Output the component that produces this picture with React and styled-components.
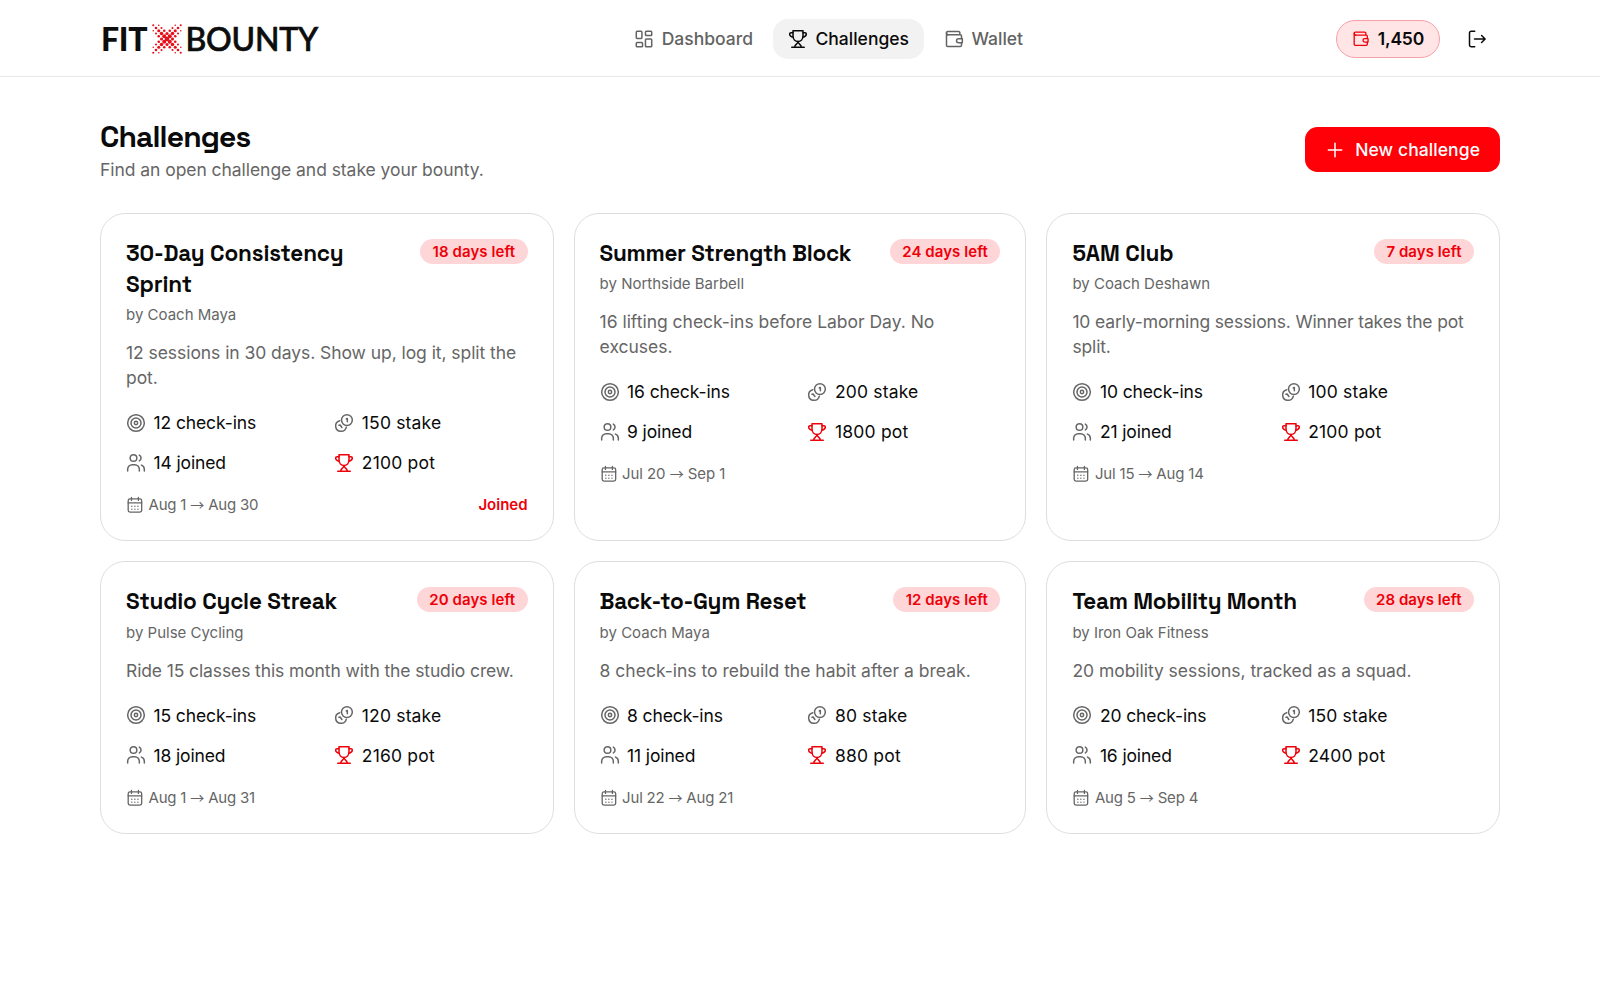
import React from "react";
import styled, { createGlobalStyle } from "styled-components";

const sans = `Inter, "Liberation Sans", sans-serif`;
const display = `"Space Grotesk", Inter, "Liberation Sans", sans-serif`;

const GlobalStyle = createGlobalStyle`
  *, *::before, *::after { box-sizing: border-box; }
  body { margin: 0; background: #fff; color: #0a0a0a; font-family: ${sans}; font-size: 17.5px; line-height: 25px; }
  h1, h2, p { margin: 0; }
  button { font: inherit; border: 0; background: none; padding: 0; color: inherit; }
`;

const Header = styled.header`
  height: 77px;
  border-bottom: 1px solid #e8e8e8;
  padding: 1px 100px 0;
  display: flex;
  justify-content: space-between;
  align-items: center;
`;
const Logo = styled.div`
  display: flex;
  align-items: center;
  width: 221px;
  height: 40px;
  padding-left: 1px;
  font-family: Lato, sans-serif;
  font-size: 32px;
  line-height: 40px;
  color: #0d0d0d;
`;
const LogoWord = styled.span`
  font-weight: ${(p) => (p.$heavy ? 900 : 500)};
  -webkit-text-stroke: ${(p) => (p.$heavy ? 0 : 0.7)}px #0d0d0d;
  letter-spacing: ${(p) => (p.$heavy ? -0.3 : -0.2)}px;
  width: ${(p) => (p.$heavy ? 50.5 : 135)}px;
  padding-left: ${(p) => (p.$heavy ? 0 : 4)}px;
  white-space: nowrap;
`;
const Nav = styled.nav`
  display: flex;
  gap: 5px;
`;
const NavItem = styled.a`
  display: flex;
  align-items: center;
  gap: 7.5px;
  height: 40px;
  padding: 0 15px;
  border-radius: 15px;
  font-weight: 500;
  color: ${(p) => (p.$active ? "#0a0a0a" : "#636363")};
  background: ${(p) => (p.$active ? "#f2f2f2" : "transparent")};
`;
const Account = styled.div`
  display: flex;
  justify-content: flex-end;
  align-items: center;
  gap: 15px;
`;
const Balance = styled.div`
  display: flex;
  align-items: center;
  gap: 8px;
  height: 38px;
  padding: 0 15px;
  border: 1px solid #f7a1a6;
  border-radius: 19px;
  background: #ffe5e6;
  font-weight: 600;
  letter-spacing: -0.2px;
`;
const IconButton = styled.button`
  width: 45px;
  height: 45px;
  display: grid;
  place-items: center;
`;
const Svg = styled.svg`
  display: block;
  flex: none;
  width: ${(p) => p.$size}px;
  height: ${(p) => p.$size}px;
  color: ${(p) => p.$color || "currentColor"};
`;

const Main = styled.main`
  padding: 40px 100px 0;
`;
const PageHead = styled.div`
  display: flex;
  align-items: center;
  justify-content: space-between;
  margin-bottom: 30.6px;
`;
const PageTitle = styled.h1`
  font-family: ${display};
  font-size: 30px;
  font-weight: 700;
  line-height: 40px;
  letter-spacing: -0.88px;
`;
const Muted = styled.p`
  color: #666;
  letter-spacing: ${(p) => p.$spacing || 0}px;
`;
const PrimaryButton = styled.button`
  display: flex;
  align-items: center;
  gap: 10px;
  height: 45px;
  padding: 0 20px;
  border-radius: 12.5px;
  background: #ff0008;
  color: #fff;
  font-weight: 500;
  letter-spacing: 0.08px;
`;
const Grid = styled.div`
  display: grid;
  grid-template-columns: 453.6fr 452.8fr 453.6fr;
  gap: 20px;
`;
const Card = styled.article`
  border: 1px solid #dedede;
  border-radius: 25px;
  padding: 25px;
`;
const CardHead = styled.div`
  display: flex;
  justify-content: space-between;
  align-items: flex-start;
  gap: 15px;
`;
const CardTitle = styled.h2`
  font-family: ${display};
  font-size: 22.5px;
  font-weight: 700;
  line-height: 30.94px;
  letter-spacing: ${(p) => p.$spacing}px;
`;
const Host = styled.p`
  margin-top: 4.7px;
  font-size: 15px;
  line-height: 20px;
  color: #666;
`;
const Badge = styled.span`
  flex: none;
  height: 25px;
  padding: 0 12.5px;
  border-radius: 12.5px;
  background: #ffd6d8;
  color: #ee0009;
  font-size: 15px;
  font-weight: 600;
  line-height: 25px;
  letter-spacing: 0.07px;
`;
const Description = styled(Muted)`
  margin-top: 15px;
`;
const Stats = styled.div`
  display: grid;
  grid-template-columns: 1fr 1fr;
  gap: 15px;
  margin-top: 20px;
`;
const Stat = styled.div`
  display: flex;
  align-items: center;
  gap: 7.5px;
  letter-spacing: ${(p) => p.$spacing}px;
`;
const CardFoot = styled.div`
  display: flex;
  justify-content: space-between;
  margin-top: 20px;
  font-size: 15px;
  line-height: 20px;
  color: #666;
`;
const Dates = styled.span`
  display: flex;
  align-items: center;
  gap: 5px;
  letter-spacing: ${(p) => p.$spacing}px;
`;
const Arrow = styled.span`
  font-family: "Noto Sans CJK JP", sans-serif;
  font-size: 14px;
  line-height: 1;
`;
const Joined = styled.span`
  color: #ee0009;
  font-weight: 600;
`;

function Icon({ size = 20, color, children }) {
  return (
    <Svg $size={size} $color={color} viewBox="0 0 24 24" fill="none" stroke="currentColor"
      strokeWidth="1.8" strokeLinecap="round" strokeLinejoin="round">
      {children}
    </Svg>
  );
}
const DashboardIcon = () => (
  <Icon>
    <rect x="2.75" y="2.75" width="6.75" height="8.5" rx="1" />
    <rect x="13.75" y="2.75" width="7.5" height="5" rx="1" />
    <rect x="2.75" y="16.25" width="7.5" height="5" rx="1" />
    <rect x="13.75" y="12" width="7.5" height="9.25" rx="1" />
  </Icon>
);
const TrophyIcon = (props) => (
  <Icon {...props}>
    <path d="M6 2h12v6.5c0 3.8-2.6 6.5-6 6.5s-6-2.7-6-6.5z" />
    <path d="M6 4.5H3.6C2.7 4.5 2 5.200 2 6.100c0 1.900 1.700 3.400 4.400 3.900" />
    <path d="M18 4.500h2.400c.9 0 1.600.7 1.600 1.600 0 1.900-1.700 3.400-4.400 3.900" />
    <path d="M12 15c0 3.200-4 3.200-4 7M12 15c0 3.200 4 3.200 4 7M4.500 22h15" />
  </Icon>
);
const WalletIcon = (props) => (
  <Icon {...props}>
    <path d="M21 11.500V8.500a1.500 1.500 0 0 0-1.500-1.500H4.500M19 7V4.500A1.500 1.500 0 0 0 17.500 3H4.500A1.500 1.500 0 0 0 3 4.500v15A1.500 1.500 0 0 0 4.500 21h15a1.500 1.500 0 0 0 1.500-1.500v-2.750" />
    <path d="M3 4.500C3 6 3.500 7 5 7" />
    <path d="M22 11.700h-4.500a2.300 2.300 0 0 0 0 4.900H22z" />
  </Icon>
);
const LogoutIcon = () => (
  <Icon>
    <path d="M9.250 2.750H5a2 2 0 0 0-2 2v14.500a2 2 0 0 0 2 2h4.250" />
    <path d="M9 12H21.500M17.500 7.750 21.750 12l-4.250 4.250" />
  </Icon>
);
const PlusIcon = () => (
  <Icon>
    <path d="M12 4v16M4 12h16" />
  </Icon>
);
const TargetIcon = (props) => (
  <Icon {...props}>
    <circle cx="12" cy="12" r="10" />
    <circle cx="12" cy="12" r="6" />
    <circle cx="12" cy="12" r="2" />
  </Icon>
);
const CoinsIcon = (props) => (
  <Icon {...props}>
    <circle cx="15.500" cy="8.500" r="6.500" />
    <path d="M6.900 9.200A6.500 6.500 0 1 0 14.800 17" />
    <path d="M14.700 7.200l1.300-.7v4M6 14.700l1.300-.3 2.200 3" />
  </Icon>
);
const UsersIcon = (props) => (
  <Icon {...props}>
    <circle cx="9" cy="6" r="4" />
    <path d="M16 2.500a4 4 0 0 1 0 7" />
    <path d="M2 21.500v-2A5.500 5.500 0 0 1 7.500 14h3a5.500 5.500 0 0 1 5.500 5.500v2" />
    <path d="M18.500 14.500c2.100.8 3.500 2.700 3.500 5v2" />
  </Icon>
);
const CalendarIcon = (props) => (
  <Icon {...props}>
    <rect x="3" y="4" width="18.500" height="18" rx="2.500" />
    <path d="M7.500 2v4M17 2v4M3 9.500h18.500" />
    <path d="M8 14h.01M12.200 14h.01M16.400 14h.01M8 18h.01M12.200 18h.01M16.400 18h.01" strokeWidth="2" />
  </Icon>
);

const dots = [];
for (let i = -5; i <= 5; i++) {
  for (let j = -5; j <= 5; j++) {
    const off = Math.abs(Math.abs(i) - Math.abs(j));
    if ((i + j) % 2 !== 0 || off > 2) continue;
    const reach = Math.max(Math.abs(i), Math.abs(j));
    dots.push([i, j, 2.3 - reach * 0.25 - off * 0.12]);
  }
}
const HalftoneX = () => (
  <Svg $size={30} viewBox="-15 -15 30 30">
    {dots.map(([i, j, r]) => (
      <circle key={`${i},${j}`} cx={i * 2.75} cy={j * 2.75} r={r} fill="#e8111b" />
    ))}
  </Svg>
);

const challenges = [
  { title: "30-Day Consistency Sprint", track: [-0.16, -0.06, -0.2], left: 18, host: "Coach Maya", text: "12 sessions in 30 days. Show up, log it, split the pot.", goal: 12, stake: 150, people: 14, pot: 2100, from: "Aug 1", to: "Aug 30", joined: true },
  { title: "Summer Strength Block", track: [-0.28, -0.02, -0.08], left: 24, host: "Northside Barbell", text: "16 lifting check-ins before Labor Day. No excuses.", goal: 16, stake: 200, people: 9, pot: 1800, from: "Jul 20", to: "Sep 1" },
  { title: "5AM Club", track: [-0.1, -0.15, -0.17], left: 7, host: "Coach Deshawn", text: "10 early-morning sessions. Winner takes the pot split.", goal: 10, stake: 100, people: 21, pot: 2100, from: "Jul 15", to: "Aug 14" },
  { title: "Studio Cycle Streak", track: [-0.2, -0.115, -0.2], left: 20, host: "Pulse Cycling", text: "Ride 15 classes this month with the studio crew.", goal: 15, stake: 120, people: 18, pot: 2160, from: "Aug 1", to: "Aug 31" },
  { title: "Back-to-Gym Reset", track: [-0.25, 0, -0.2], left: 12, host: "Coach Maya", text: "8 check-ins to rebuild the habit after a break.", goal: 8, stake: 80, people: 11, pot: 880, from: "Jul 22", to: "Aug 21" },
  { title: "Team Mobility Month", track: [-0.24, -0.04, -0.18], left: 28, host: "Iron Oak Fitness", text: "20 mobility sessions, tracked as a squad.", goal: 20, stake: 150, people: 16, pot: 2400, from: "Aug 5", to: "Sep 4" },
];

function ChallengeCard({ c }) {
  const [titleTrack, textTrack, dateTrack] = c.track;
  return (
    <Card>
      <CardHead>
        <CardTitle $spacing={titleTrack}>{c.title}</CardTitle>
        <Badge>{c.left} days left</Badge>
      </CardHead>
      <Host>by {c.host}</Host>
      <Description $spacing={textTrack}>{c.text}</Description>
      <Stats>
        <Stat $spacing={-0.11}><TargetIcon color="#666" />{c.goal} check-ins</Stat>
        <Stat $spacing={0.17}><CoinsIcon color="#666" />{c.stake} stake</Stat>
        <Stat $spacing={-0.14}><UsersIcon color="#666" />{c.people} joined</Stat>
        <Stat $spacing={0.19}><TrophyIcon color="#ee0009" />{c.pot} pot</Stat>
      </Stats>
      <CardFoot>
        <Dates $spacing={dateTrack}>
          <CalendarIcon size={17.5} />
          <span>{c.from} <Arrow>→</Arrow> {c.to}</span>
        </Dates>
        {c.joined && <Joined>Joined</Joined>}
      </CardFoot>
    </Card>
  );
}

export default function App() {
  return (
    <>
      <GlobalStyle />
      <Header>
        <Logo>
          <LogoWord $heavy>FIT</LogoWord>
          <HalftoneX />
          <LogoWord>BOUNTY</LogoWord>
        </Logo>
        <Nav>
          <NavItem><DashboardIcon />Dashboard</NavItem>
          <NavItem $active><TrophyIcon />Challenges</NavItem>
          <NavItem><WalletIcon />Wallet</NavItem>
        </Nav>
        <Account>
          <Balance><WalletIcon size={17.5} color="#ee0009" />1,450</Balance>
          <IconButton><LogoutIcon /></IconButton>
        </Account>
      </Header>
      <Main>
        <PageHead>
          <div>
            <PageTitle>Challenges</PageTitle>
            <Muted $spacing={-0.055}>Find an open challenge and stake your bounty.</Muted>
          </div>
          <PrimaryButton><PlusIcon />New challenge</PrimaryButton>
        </PageHead>
        <Grid>
          {challenges.map((c) => <ChallengeCard key={c.title} c={c} />)}
        </Grid>
      </Main>
    </>
  );
}
